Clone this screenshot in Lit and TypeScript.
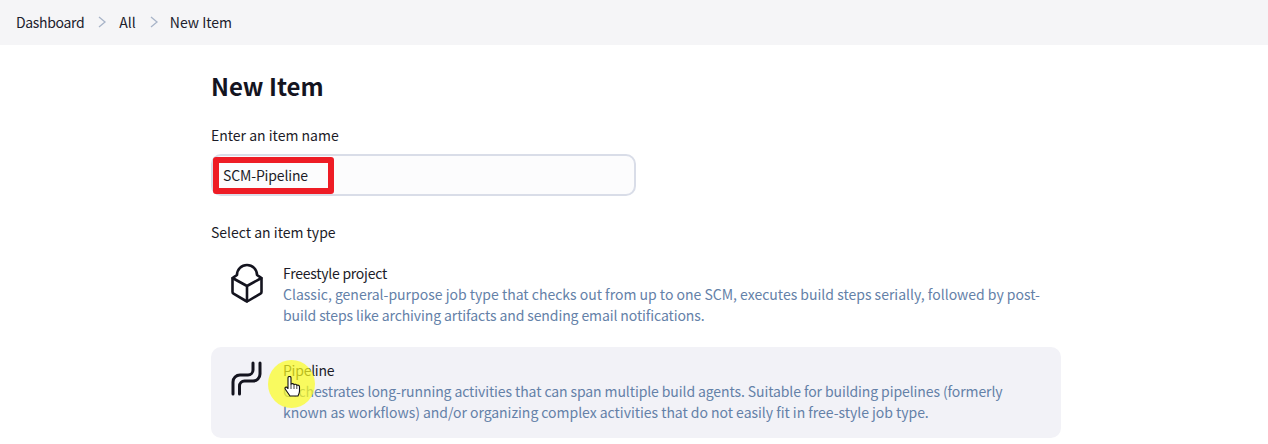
import { LitElement, html, css } from "lit";
import { customElement } from "lit/decorators.js";

@customElement("app-root")
export class AppRoot extends LitElement {
  static styles = css`
    :host { display: block; width: 1268px; height: 444px; overflow: hidden; background: #fff; color: #1c1c28; font-family: "Noto Sans CJK KR", "Noto Sans", sans-serif; font-size: 14px; }
    * { box-sizing: border-box; }
    .crumbs { height: 45px; background: #f5f5f7; display: flex; align-items: center; padding: 0 0 2px 16px; color: #20202c; font-size: 14px; }
    .crumbs svg { width: 10px; height: 12px; margin: 0 12px 0 13px; }
    .crumbs svg + span + svg { margin-right: 11px; }
    .first-crumb { letter-spacing: -0.33px; }
    main { width: 850px; margin-left: 211px; padding-top: 25px; }
    h1 { margin: 0; font-size: 24px; line-height: 32px; font-weight: 700; color: #14141f; }
    .lbl { line-height: 20px; }
    .name { margin-top: 23px; }
    .field { position: relative; margin-top: 9px; width: 425px; height: 42px; border: 2px solid #d9dde8; border-radius: 10px; background: #fcfcfd; display: flex; align-items: center; padding-left: 10px; }
    .field span { letter-spacing: -0.15px; }
    .mark { position: absolute; left: 0; top: 1px; width: 121px; height: 37px; border: 6px solid #ee1c25; border-radius: 3px; }
    .type { margin-top: 26px; }
    .item { display: flex; padding: 13px 0 10px 16px; border-radius: 10px; position: relative; }
    .item.first { margin-top: 8px; }
    .item.hover { background: #f2f2f7; margin-top: 11px; height: 91px; }
    .ic { width: 40px; height: 40px; flex: none; margin-right: 16px; }
    .ic svg { width: 40px; height: 40px; display: block; }
    .t { line-height: 21px; letter-spacing: -0.25px; }
    .d { line-height: 21px; color: #6481a8; }
    .tight { letter-spacing: -0.1px; }
    .hover .d { letter-spacing: -0.03px; max-width: 750px; }
    .hover .d .tight { letter-spacing: -0.1px; }
    .halo { position: absolute; left: 57px; top: 13px; width: 47px; height: 48px; border-radius: 50%; background: rgba(252, 254, 30, 0.7); }
    .hand { position: absolute; left: 73px; top: 29px; width: 17px; height: 21px; }
  `;
  render() {
    const chev = html`<svg viewBox="0 0 10 12" fill="none" stroke="#a8b4c8" stroke-width="1.3"><path d="M2 1l6 5-6 5"/></svg>`;
    return html`
      <nav class="crumbs"><span class="first-crumb">Dashboard</span>${chev}<span>All</span>${chev}<span>New Item</span></nav>
      <main>
        <h1>New Item</h1>
        <div class="lbl name">Enter an item name</div>
        <div class="field"><span>SCM-Pipeline</span><div class="mark"></div></div>
        <div class="lbl type">Select an item type</div>
        <div class="item first">
          <div class="ic"><svg viewBox="0 0 40 40" fill="none" stroke="#14141f" stroke-width="2.6" stroke-linejoin="round" stroke-linecap="round"><path d="M5.500 15 20 23l14.500-8M20 23v15.500"/><path d="M10 12A10 10 0 0 1 30 12L33.500 14.400a2 2 0 0 1 1 1.700V29a2 2 0 0 1-1 1.700L21 38a2 2 0 0 1-2 0L6.500 30.700a2 2 0 0 1-1-1.700V16.100a2 2 0 0 1 1-1.700Z"/></svg></div>
          <div><div class="t">Freestyle project</div><div class="d">Classic, general-purpose job type that checks out from up to one SCM, executes build steps serially, followed by post-<span class="tight">build steps like archiving artifacts and sending email notifications.</span></div></div>
        </div>
        <div class="item hover">
          <div class="ic"><svg viewBox="0 0 40 40" fill="none" stroke="#14141f" stroke-width="3" stroke-linecap="round" stroke-linejoin="round"><path d="M6 34V22a7 7 0 0 1 7-7h8a5 5 0 0 0 5-5V3"/><path d="M12.500 34V26a5 5 0 0 1 5-5H26a7 7 0 0 0 7-7V3"/></svg></div>
          <div><div class="t">Pipeline</div><div class="d"><span class="tight">Orchestrates long-running activities that can span multiple build agents. Suitable for building pipelines (formerly</span> known as workflows) and/or organizing complex activities that do not easily fit in free-style job type.</div></div>
          <div class="halo"></div>
          <svg class="hand" viewBox="0 0 17 21"><path d="M4 1.800c0-1.800 3-1.800 3 0V8c1-.7 2.500-.5 3 .5 1-.6 2.300-.3 2.800.8 1-.5 2.700 0 2.700 1.500V15c0 2-.8 3.500-1.500 5H6L1.500 13.500C.3 11.700 1.800 10.300 3 11.500l1 1Z" fill="#fff" stroke="#111" stroke-width="1.100" stroke-linejoin="round"/><path d="M7 8v5M10 8.500v4.500M12.800 9.300V13" stroke="#111" stroke-width=".8" fill="none"/></svg>
        </div>
      </main>
    `;
  }
}
